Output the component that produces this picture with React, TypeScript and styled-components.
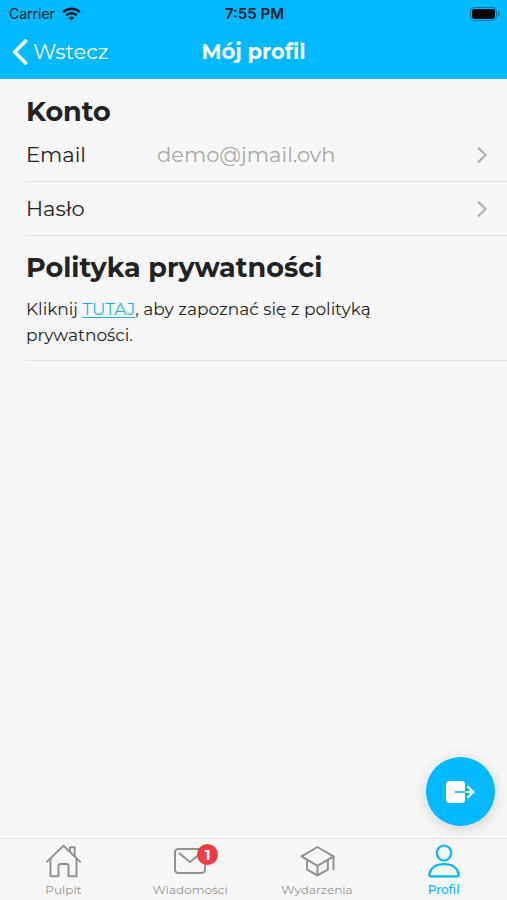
import React from "react";
import styled, { createGlobalStyle } from "styled-components";

const BLUE = "#00b9ff";
const GREY = "#929292";

const GlobalStyle = createGlobalStyle`
  * { box-sizing: border-box; }
  body {
    margin: 0;
    background: #f7f7f7;
    color: #222222;
    font-family: Montserrat, Inter, sans-serif;
  }
`;

const Screen = styled.div`
  min-height: 100vh;
  display: flex;
  flex-direction: column;
`;

const Header = styled.header`
  background: ${BLUE};
`;

const ThreeColumns = styled.div`
  display: grid;
  grid-template-columns: 1fr auto 1fr;
  align-items: center;
`;

const StatusBar = styled(ThreeColumns)`
  height: 28px;
  padding: 0 7px 0 9px;
  color: #06202b;
  font: 400 14px/20px Inter, sans-serif;
`;

const Carrier = styled.span`
  display: flex;
  align-items: center;
  gap: 7px;
`;

const Clock = styled.time`
  font-size: 15px;
  font-weight: 600;
`;

const BatterySlot = styled.span`
  display: flex;
  justify-content: flex-end;
`;

const NavBar = styled(ThreeColumns)`
  height: 51px;
  padding: 0 12px 3px;
  color: #ffffff;
`;

const BackButton = styled.button`
  display: flex;
  align-items: center;
  gap: 5px;
  justify-self: start;
  padding: 0;
  border: 0;
  background: none;
  color: inherit;
  font: 400 21px/28px Montserrat, Inter, sans-serif;
  cursor: pointer;
`;

const Title = styled.h1`
  margin: 0;
  font-size: 21px;
  line-height: 28px;
  font-weight: 700;
`;

const Main = styled.main`
  position: relative;
  flex: 1;
  padding: 1px 0 0 26px;
`;

const Section = styled.section`
  padding-top: 16px;
`;

const Heading = styled.h2`
  margin: 0;
  font-size: 27px;
  line-height: 32px;
  font-weight: 700;
`;

const Row = styled.button`
  display: grid;
  grid-template-columns: 131px 1fr auto;
  align-items: center;
  width: 100%;
  height: 54px;
  padding: 0 19px 0 0;
  border: 0;
  border-bottom: 1px solid #e3e3e3;
  background: none;
  color: inherit;
  font: 400 21px/28px Montserrat, Inter, sans-serif;
  text-align: left;
  cursor: pointer;
`;

const Value = styled.span`
  color: #a8a8a8;
`;

const Paragraph = styled.p`
  margin: 0;
  padding: 12px 80px 12px 0;
  border-bottom: 1px solid #e3e3e3;
  font-size: 17px;
  line-height: 26px;
`;

const PolicyLink = styled.a`
  color: #1fb4f0;
  text-decoration: underline;
  text-underline-offset: 2px;
`;

const LogoutButton = styled.button`
  position: absolute;
  right: 12px;
  bottom: 12px;
  display: flex;
  align-items: center;
  justify-content: center;
  width: 69px;
  height: 69px;
  padding: 0;
  border: 0;
  border-radius: 50%;
  background: ${BLUE};
  box-shadow: 0 3px 14px rgba(0, 0, 0, 0.16);
  cursor: pointer;
`;

const TabBar = styled.nav`
  display: grid;
  grid-template-columns: repeat(4, 1fr);
  height: 62px;
  border-top: 1px solid #e6e6e6;
  background: #f7f7f7;
`;

const Tab = styled.a<{ $active?: boolean }>`
  display: flex;
  flex-direction: column;
  align-items: center;
  gap: 3px;
  padding-top: 4px;
  color: ${(p) => (p.$active ? BLUE : GREY)};
  font-size: 12px;
  line-height: 16px;
  font-weight: ${(p) => (p.$active ? 500 : 400)};
  text-decoration: none;
`;

const TabIcon = styled.span`
  position: relative;
  display: flex;
  height: 36px;
`;

const Badge = styled.span`
  position: absolute;
  top: 1px;
  right: -12px;
  width: 21px;
  height: 21px;
  border-radius: 50%;
  background: #ee3d42;
  color: #ffffff;
  font-size: 15px;
  line-height: 21px;
  font-weight: 700;
  text-align: center;
`;

const WifiIcon = () => (
  <svg width="19" height="14" viewBox="0 0 19 14" fill="none" stroke="#06202b" strokeWidth="2.5" aria-hidden="true">
    <path d="M1.2 5.1C6 .6 13 .6 17.8 5.1" />
    <path d="M4.2 8.3c3-2.8 7.6-2.8 10.6 0" />
    <path d="M9.5 13.6 6.6 10.7c1.6-1.5 4.2-1.5 5.8 0Z" fill="#06202b" stroke="none" />
  </svg>
);

const BatteryIcon = () => (
  <svg width="30" height="14" viewBox="0 0 30 14" aria-hidden="true">
    <rect x=".5" y=".5" width="26" height="13" rx="4" fill="none" stroke="#06202b" strokeOpacity=".42" />
    <rect x="2" y="2" width="23" height="10" rx="2.4" fill="#000" />
    <path d="M28 4.6c2.2.7 2.2 4.1 0 4.8Z" fill="#06202b" fillOpacity=".45" />
  </svg>
);

const BackIcon = () => (
  <svg width="16" height="26" viewBox="0 0 16 26" fill="none" stroke="currentColor" strokeWidth="3.6" strokeLinecap="round" strokeLinejoin="round" aria-hidden="true">
    <path d="M13.6 2 2.8 13l10.8 11" />
  </svg>
);

const ChevronIcon = () => (
  <svg width="12" height="18" viewBox="0 0 12 18" fill="none" stroke="#b5b5b5" strokeWidth="2.2" aria-hidden="true">
    <path d="m2 1.6 7.6 7.4L2 16.4" />
  </svg>
);

const LogoutIcon = () => (
  <svg width="30" height="24" viewBox="0 0 30 24" fill="none" aria-hidden="true">
    <rect x="0" y="1" width="19" height="22" rx="3.5" fill="#fff" />
    <path d="M19 12h4" stroke={BLUE} strokeWidth="4.4" />
    <path d="M18 12h10M21.5 6.2 27.4 12l-5.9 5.8" stroke="#fff" strokeWidth="2.2" />
    <path d="M9 12h10" stroke="#35bff8" strokeWidth="2" />
  </svg>
);

const lineIcon = {
  fill: "none",
  stroke: "currentColor",
  strokeWidth: 2,
  strokeLinecap: "round" as const,
  strokeLinejoin: "round" as const,
  "aria-hidden": true,
};

const HomeIcon = () => (
  <svg width="36" height="36" viewBox="0 0 36 36" {...lineIcon}>
    <path d="M2 18.6 18.5 2.8 35 18.6" />
    <path d="M5.5 15.8v17.4h8V23a2 2 0 0 1 2-2h6a2 2 0 0 1 2 2v10.2h8V15.8" />
    <path d="M25 8.4V4.2h4.6v8.8" />
  </svg>
);

const MailIcon = () => (
  <svg width="32" height="36" viewBox="0 0 32 36" {...lineIcon}>
    <rect x="1" y="6" width="30" height="24" rx="3.5" />
    <path d="M5.6 10.5 16 19.1l10.4-8.6" />
  </svg>
);

const CapIcon = () => (
  <svg width="36" height="36" viewBox="0 0 36 36" {...lineIcon}>
    <path d="M18.5 4 2.5 13.4l16 9.4 16-9.4Z" />
    <path d="M8.1 16.8v9.8l10.4 5.8 10.4-5.8v-9.8M18.5 22.8v9.6M34.5 13.4v13" />
  </svg>
);

const PersonIcon = () => (
  <svg width="36" height="36" viewBox="0 0 36 36" {...lineIcon} strokeWidth={2.2}>
    <ellipse cx="18" cy="10" rx="7.1" ry="7.5" />
    <path d="M5 33.4c-1.4 0-1.9-.9-1.7-2.2C4.4 25 10 21.2 18 21.2S31.600 25 32.700 31.200c.2 1.300-.3 2.200-1.700 2.200Z" />
  </svg>
);

export default function App() {
  return (
    <>
      <GlobalStyle />
      <Screen>
        <Header>
          <StatusBar>
            <Carrier>
              Carrier
              <WifiIcon />
            </Carrier>
            <Clock>7:55 PM</Clock>
            <BatterySlot>
              <BatteryIcon />
            </BatterySlot>
          </StatusBar>
          <NavBar>
            <BackButton type="button">
              <BackIcon />
              Wstecz
            </BackButton>
            <Title>Mój profil</Title>
          </NavBar>
        </Header>
        <Main>
          <Section>
            <Heading>Konto</Heading>
            <Row type="button">
              <span>Email</span>
              <Value>demo@jmail.ovh</Value>
              <ChevronIcon />
            </Row>
            <Row type="button">
              <span>Hasło</span>
              <span />
              <ChevronIcon />
            </Row>
          </Section>
          <Section>
            <Heading>Polityka prywatności</Heading>
            <Paragraph>
              Kliknij <PolicyLink href="#polityka">TUTAJ</PolicyLink>, aby zapoznać się z polityką prywatności.
            </Paragraph>
          </Section>
          <LogoutButton type="button" aria-label="Wyloguj">
            <LogoutIcon />
          </LogoutButton>
        </Main>
        <TabBar>
          <Tab href="#pulpit">
            <TabIcon>
              <HomeIcon />
            </TabIcon>
            Pulpit
          </Tab>
          <Tab href="#wiadomosci">
            <TabIcon>
              <MailIcon />
              <Badge>1</Badge>
            </TabIcon>
            Wiadomości
          </Tab>
          <Tab href="#wydarzenia">
            <TabIcon>
              <CapIcon />
            </TabIcon>
            Wydarzenia
          </Tab>
          <Tab href="#profil" $active aria-current="page">
            <TabIcon>
              <PersonIcon />
            </TabIcon>
            Profil
          </Tab>
        </TabBar>
      </Screen>
    </>
  );
}
